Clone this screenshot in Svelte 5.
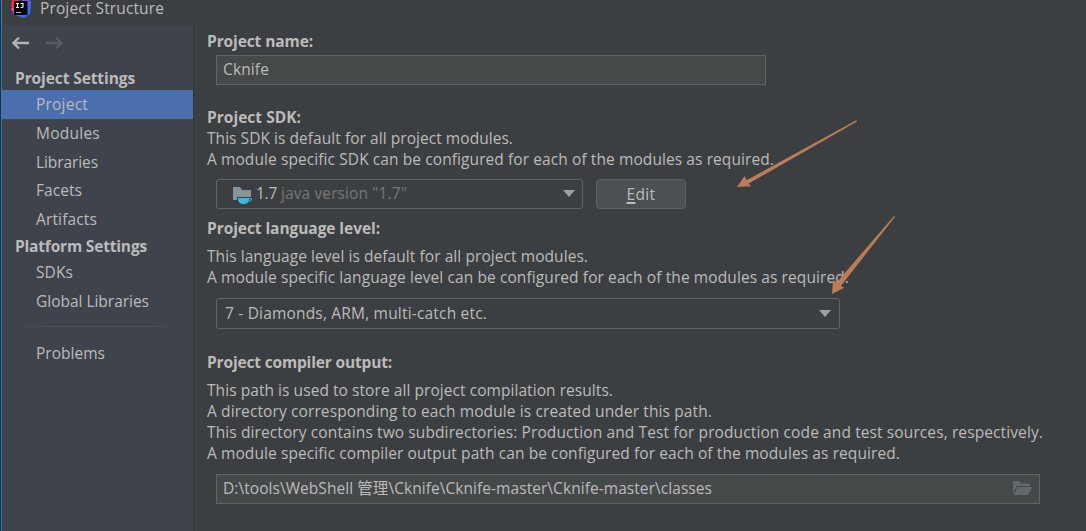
<script>
  const projectItems = [
    ['Project', 52], ['Modules', 64], ['Libraries', 62], ['Facets', 46], ['Artifacts', 61]
  ];
  const platformItems = [['SDKs', 37], ['Global Libraries', 113]];
  const sdkNotes = [
    ['This SDK is default for all project modules.', 306],
    ['A module specific SDK can be configured for each of the modules as required.', 567]
  ];
  const levelNotes = [
    ['This language level is default for all project modules.', 381],
    ['A module specific language level can be configured for each of the modules as required.', 642]
  ];
  const outputNotes = [
    ['This path is used to store all project compilation results.', 406],
    ['A directory corresponding to each module is created under this path.', 505],
    ['This directory contains two subdirectories: Production and Test for production code and test sources, respectively.', 836],
    ['A module specific compiler output path can be configured for each of the modules as required.', 693]
  ];

  // Spreads the letters so that a label takes the given width.
  function fit(node, width) {
    const natural = node.getBoundingClientRect().width;
    node.style.letterSpacing = `${(width - natural) / node.textContent.length}px`;
  }
</script>

{#snippet label(text, width)}<span class="label" use:fit={width}>{text}</span>{/snippet}

<div class="window">
  <header>
    <svg class="logo" width="20" height="20" viewBox="0 0 20 20">
      <defs>
        <linearGradient id="edge" x1="0" x2="1" y1="0" y2="1">
          <stop offset="0" stop-color="#c33fe0" /><stop offset=".5" stop-color="#6b57ff" /><stop offset="1" stop-color="#087cfa" />
        </linearGradient>
      </defs>
      <path d="M0 11 4 8v6l-1 1z" fill="#fc801d" />
      <path d="M1 2h7v9H2L0 8z" fill="#fe2857" />
      <path d="M11 1h6l3 3-1 12-6 4-9-3-3-4 3-2h8z" fill="url(#edge)" />
      <path d="M1 12h3v5l-2-1z" fill="#a83bdf" />
      <rect x="3" y="3" width="13.500" height="14" fill="#060606" />
      <path d="M5 5.500h3M6.500 5.500v4M5 9.500h3M9.500 5.500h2.500v3q0 1-1 1H9.500" fill="none" stroke="#eee" stroke-width="1.2" />
      <path d="M5 14.500h5" stroke="#bbb" stroke-width="1" />
    </svg>
    {@render label('Project Structure', 124)}
  </header>

  <div class="body">
    <nav>
      <div class="history">
        <svg width="18" height="14" viewBox="0 0 18 14"><path d="M17 7H2M7 1.500 1.500 7 7 12.500" /></svg>
        <svg class="off" width="18" height="14" viewBox="0 0 18 14"><path d="M1 7h15M11 1.500 16.500 7 11 12.500" /></svg>
      </div>
      <div class="group">{@render label('Project Settings', 120)}</div>
      {#each projectItems as [name, width], i}
        <div class="item" class:selected={i === 0}>{@render label(name, width)}</div>
      {/each}
      <div class="group">{@render label('Platform Settings', 132)}</div>
      {#each platformItems as [name, width]}
        <div class="item">{@render label(name, width)}</div>
      {/each}
      <div class="divider"></div>
      <div class="item">{@render label('Problems', 69)}</div>
    </nav>

    <main>
      <section class="name">
        <h2>{@render label('Project name:', 106)}</h2>
        <div class="field">{@render label('Cknife', 46)}</div>
      </section>

      <section class="sdk">
        <h2>{@render label('Project SDK:', 94)}</h2>
        {#each sdkNotes as [text, width]}<p>{@render label(text, width)}</p>{/each}
        <div class="controls">
          <div class="combo">
            <svg class="folder" width="20" height="18" viewBox="0 0 20 18">
              <path d="M0 1h7l2 3h9v10H0z" fill="#87939a" />
              <path d="M4 11h15v4l-3 3H6l-2-3z" fill="#3c3f41" />
              <path d="M5 12h11v1q0 5-5.500 5T5 13z" fill="#40b6e0" />
              <path d="M15 12.700h3q.7 0 .2 1.300-.7 1.500-4 1.500" fill="none" stroke="#40b6e0" stroke-width="1.1" />
            </svg>
            <span class="version">{@render label('1.7', 21)}</span>
            <span class="muted">{@render label('java version "1.7"', 126)}</span>
            <i class="caret"></i>
          </div>
          <button><span class="label" use:fit={29}><u>E</u>dit</span></button>
        </div>
      </section>

      <section class="level">
        <h2>{@render label('Project language level:', 173)}</h2>
        {#each levelNotes as [text, width]}<p>{@render label(text, width)}</p>{/each}
        <div class="combo">
          {@render label('7 - Diamonds, ARM, multi-catch etc.', 262)}
          <i class="caret"></i>
        </div>
      </section>

      <section class="output">
        <h2>{@render label('Project compiler output:', 185)}</h2>
        {#each outputNotes as [text, width]}<p>{@render label(text, width)}</p>{/each}
        <div class="field">
          {@render label('D:\\tools\\WebShell 管理\\Cknife\\Cknife-master\\Cknife-master\\classes', 489)}
          <svg class="browse" width="19" height="15" viewBox="0 0 19 15">
            <path d="M0 0h6l2 2.500h9V5H4L0 12.500z" />
            <path d="M4.500 6H19l-4 8H.5z" />
          </svg>
        </div>
      </section>
    </main>
  </div>

  <svg class="pointers" width="1086" height="531" viewBox="0 0 1086 531">
    <path d="M737 187 744.600 176l1.900 4.300L856.300 120.300l.7 1.200L748.700 183.600l2.300 2.700z" />
    <path d="M832 294 833 280.300l4 1.700L894 216l1 .8L841 285.700l3.200 2z" />
  </svg>
</div>

<style>
  :global(body) { margin: 0; background: #3c3f41; }
  .window {
    position: relative;
    box-sizing: border-box;
    width: 1086px;
    height: 531px;
    overflow: hidden;
    border-left: 1px solid #2b2d2f;
    background: #3c3f41;
    color: #bbb;
    font: 15.500px/21.300px "Open Sans", "Noto Sans CJK SC", sans-serif;
  }
  .label { display: inline-block; white-space: pre; }
  header {
    display: flex;
    align-items: center;
    box-sizing: border-box;
    height: 25px;
    padding: 0 0 8px 9px;
    border-left: 1px solid #287bbd;
    gap: 9px;
    line-height: 17px;
  }
  .logo { margin-top: -1px; }
  .body { display: flex; height: 506px; }
  nav {
    box-sizing: border-box;
    width: 193px;
    border-left: 1px solid #287bbd;
    border-right: 1px solid #323537;
    background: #3f434c;
  }
  .history { display: flex; gap: 15px; height: 30px; padding: 11px 0 0 10px; }
  .history path { fill: none; stroke: #b2b4b6; stroke-width: 2.3; }
  .history .off path { stroke: #5a5b5c; }
  .group { height: 24px; padding-left: 13px; font-weight: 700; line-height: 25px; }
  .item { height: 28.800px; padding-left: 34px; line-height: 29.600px; }
  .selected { background: #4b6eaf; }
  .divider {
    height: 1px;
    margin: 10px 8px 12.600px;
    background: linear-gradient(90deg, transparent, #515151 25%, #515151 75%, transparent);
  }
  main { flex: 1; padding: 6px 0 0 13px; }
  section { display: flex; flex-direction: column; }
  h2 { margin: 0; height: 22px; font: inherit; font-weight: 700; }
  p { margin: 0; height: 21.300px; }
  .name { height: 76px; }
  .sdk { height: 111px; }
  .sdk h2 { height: 21px; }
  .level { height: 134px; }
  .level h2 { height: 28px; }
  .output h2 { height: 27.600px; }
  .field, .combo {
    display: flex;
    align-items: center;
    box-sizing: border-box;
    height: 30px;
    margin-left: 9px;
    border: 1px solid #646464;
  }
  .field { padding: 0 7px 0 6px; background: #45494a; }
  .name .field { width: 550px; margin-top: 2px; }
  .output .field { width: 824px; margin-top: 9.200px; }
  .combo { border-radius: 3px; padding: 0 7px 0 8px; }
  .controls { display: flex; gap: 13px; margin-top: 8.400px; }
  .controls .combo { width: 367px; padding-left: 16px; }
  .level .combo { width: 624px; height: 31px; margin-top: 9px; padding: 1px 8px 0; }
  .caret {
    margin-left: auto;
    border: 6px solid transparent;
    border-top: 7px solid #9da0a2;
    border-bottom: 0;
  }
  .folder { margin-top: 2px; }
  .version { margin-left: 3px; }
  .muted { margin-left: 4px; color: #777; }
  button {
    box-sizing: border-box;
    width: 90px;
    height: 30px;
    padding: 1px 0 0;
    border: 1px solid #5e6060;
    border-radius: 4px;
    background: #4c5052;
    color: #bbb;
    font: inherit;
  }
  u { text-decoration-thickness: 2px; text-underline-offset: 2px; }
  .browse { margin-left: auto; fill: #606a6e; }
  .pointers { position: absolute; top: 0; left: -1px; fill: #bd7b57; }
</style>
